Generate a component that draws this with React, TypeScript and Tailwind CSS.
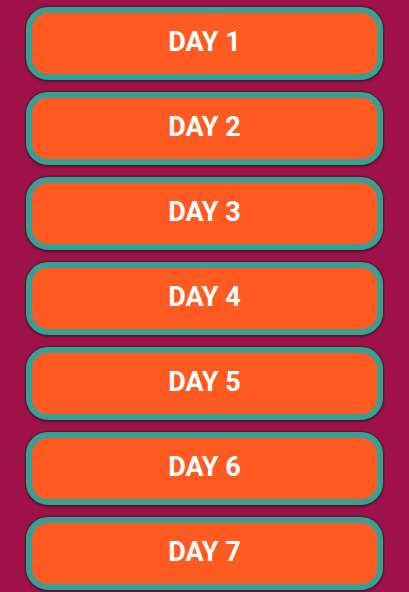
const days = [1, 2, 3, 4, 5, 6, 7]

export default function App() {
  return (
    <div className="w-[409px] h-[592px] overflow-hidden bg-[#9f1249] flex flex-col items-center gap-[12px] pt-[7px] font-['Roboto',sans-serif]">
      {days.map((d) => (
        <button
          key={d}
          className="w-[357px] h-[73px] shrink-0 rounded-[22px] border-[6px] border-[#38a093] bg-[#ff5a22] shadow-[0_0_0_1.5px_rgba(40,30,40,0.5),0_2px_3px_rgba(0,0,0,0.3)] flex items-center justify-center pb-[3px] text-white text-[27px] font-bold"
        >
          DAY {d}
        </button>
      ))}
    </div>
  )
}
